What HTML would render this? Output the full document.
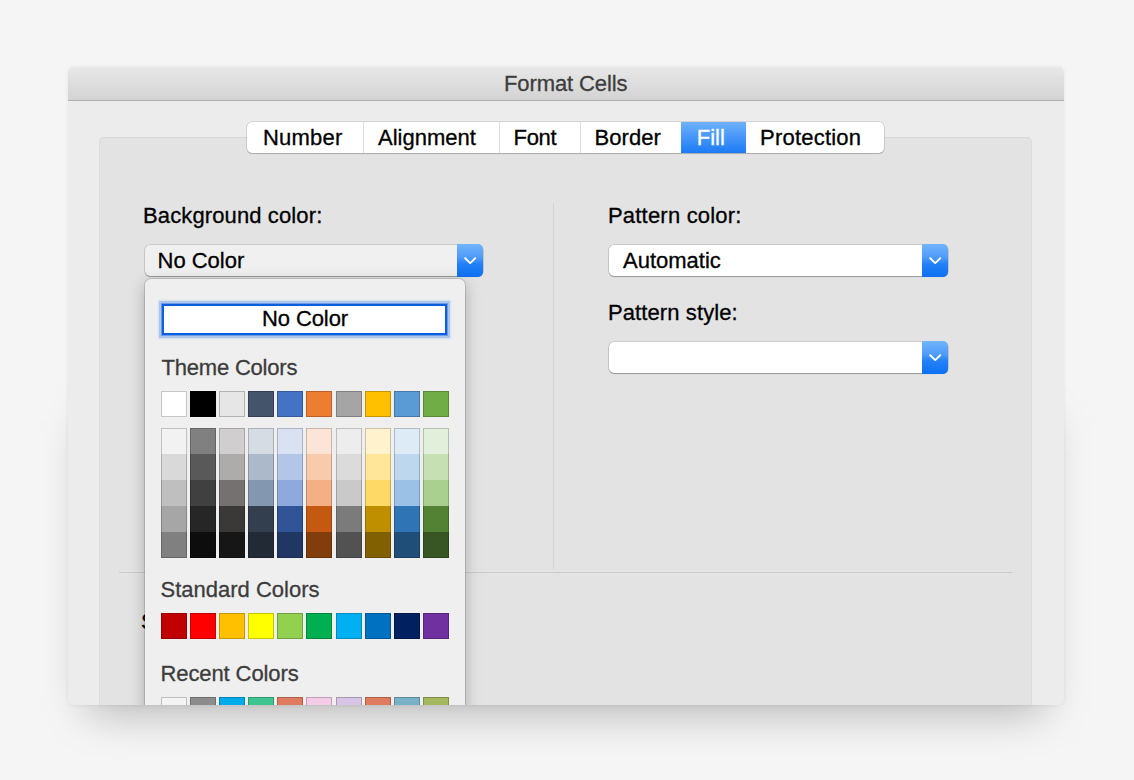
<!DOCTYPE html>
<html><head><meta charset="utf-8">
<style>
*{box-sizing:border-box;margin:0;padding:0}
html,body{width:1134px;height:780px;overflow:hidden;background:#f5f5f5;font-family:"Liberation Sans",sans-serif;}
.abs{position:absolute}
#win{position:absolute;left:68px;top:67px;width:996px;height:638px;border-radius:6px;background:#ececec;overflow:hidden;
 box-shadow:0 0 4px rgba(0,0,0,0.07);}
#title{position:absolute;left:0;top:0;width:996px;height:34px;background:linear-gradient(#e8e8e8,#d3d3d3);border-bottom:1px solid #b0b0b0;}
.t{position:absolute;white-space:nowrap;font-size:22px;line-height:22px;color:#000;-webkit-text-stroke:0.3px currentColor}
#box{position:absolute;left:31px;top:70px;width:933px;height:600px;background:#e3e3e3;border:1px solid #dddddd;border-top-color:#d6d6d6;border-radius:5px}
#tabs{position:absolute;left:179px;top:55px;width:637px;height:31px;background:#fff;border-radius:5px;box-shadow:0 0 0 0.5px rgba(0,0,0,0.2),0 1px 1px rgba(0,0,0,0.17)}
.tab{position:absolute;top:0;height:31px;border-left:1px solid #dcdcdc}
.dd{position:absolute;height:31px;background:#fff;border-radius:5px;box-shadow:0 0 0 0.5px rgba(0,0,0,0.22),0 1px 1px rgba(0,0,0,0.25)}
.ddb{position:absolute;right:0;top:-1px;width:26px;height:32.5px;border-radius:0 5px 5px 0;background:linear-gradient(#72b4fc 0%,#4f9cf9 40%,#2481f6 60%,#0d70f4 100%)}
.ddb svg{position:absolute;left:6.7px;top:13.2px}
#popup{position:absolute;left:77px;top:212px;width:320px;height:460px;background:#efefef;border-radius:6px;box-shadow:0 0 0 1px rgba(0,0,0,0.12),0 4px 16px rgba(0,0,0,0.25)}
.sw{position:absolute;width:26px;height:26px;border:1px solid rgba(0,0,0,0.22)}
</style></head>
<body>
<div class="abs" style="left:88px;top:420px;width:956px;height:292px;background:rgba(0,0,0,0.27);filter:blur(22px)"></div>
<div id="win">
  <div id="title"><div class="t" style="left:436px;top:6px;color:#3d3d3d;letter-spacing:-0.1px">Format Cells</div></div>
  <div id="box"></div>
  <div id="tabs">
    <div class="t" style="left:16px;top:5px;letter-spacing:0.2px">Number</div>
    <div class="tab" style="left:116px;width:136px"><div class="t" style="left:14px;top:5px">Alignment</div></div>
    <div class="tab" style="left:252px;width:81px"><div class="t" style="left:13.5px;top:5px;letter-spacing:-0.3px">Font</div></div>
    <div class="tab" style="left:333px;width:101px"><div class="t" style="left:13.5px;top:5px;letter-spacing:0.05px">Border</div></div>
    <div class="tab" style="left:434px;width:65px;background:linear-gradient(#6fb1fb,#1c7bf6);border-left:none"><div class="t" style="left:15.7px;top:5px;color:#fff">Fill</div></div>
    <div class="tab" style="left:499px;width:138px;border-left:none"><div class="t" style="left:14px;top:5px;letter-spacing:0.22px">Protection</div></div>
  </div>
  <div class="t" style="left:75px;top:138px;letter-spacing:0.12px">Background color:</div>
  <div class="dd" style="left:77px;top:178px;width:338px;background:#f0f0f0"><div class="t" style="left:12.5px;top:5px">No Color</div><div class="ddb"><svg width="13" height="8" viewBox="0 0 13 8"><path d="M1.2 1.2 L6.2 6.1 L11.2 1.2" stroke="#fff" stroke-width="1.9" stroke-linecap="round" stroke-linejoin="round" fill="none"/></svg></div></div>
  <div class="abs" style="left:485px;top:136px;width:1px;height:366px;background:#d3d3d3"></div>
  <div class="t" style="left:540px;top:138px;letter-spacing:0.2px">Pattern color:</div>
  <div class="dd" style="left:541px;top:178px;width:339px"><div class="t" style="left:14px;top:5px">Automatic</div><div class="ddb"><svg width="13" height="8" viewBox="0 0 13 8"><path d="M1.2 1.2 L6.2 6.1 L11.2 1.2" stroke="#fff" stroke-width="1.9" stroke-linecap="round" stroke-linejoin="round" fill="none"/></svg></div></div>
  <div class="t" style="left:540px;top:235px;letter-spacing:0.1px">Pattern style:</div>
  <div class="dd" style="left:541px;top:275px;width:339px"><div class="ddb"><svg width="13" height="8" viewBox="0 0 13 8"><path d="M1.2 1.2 L6.2 6.1 L11.2 1.2" stroke="#fff" stroke-width="1.9" stroke-linecap="round" stroke-linejoin="round" fill="none"/></svg></div></div>
  <div class="abs" style="left:51px;top:505px;width:893px;height:1px;background:#cacaca"></div>
  <div class="t" style="left:73px;top:544px">Sample</div>
  <div id="popup">
    <div class="abs" style="left:17px;top:25px;width:285px;height:30.5px;background:#fff;border:2px solid #0a5fe0;box-shadow:0 0 0 1px rgba(40,105,220,0.45),0 0 0 3px rgba(95,150,230,0.35),0 0 1.5px 4px rgba(130,175,240,0.25)"><div class="t" style="left:0.5px;width:281px;text-align:center;top:2px;letter-spacing:-0.1px">No Color</div></div>
    <div class="t" style="left:16.5px;top:78px;color:#3c3c3c;letter-spacing:-0.2px">Theme Colors</div>
    <div id="theme"><div class="sw" style="left:16px;top:112px;height:26px;background:#FFFFFF"></div><div class="sw" style="left:45px;top:112px;height:26px;background:#000000"></div><div class="sw" style="left:74px;top:112px;height:26px;background:#E7E6E6"></div><div class="sw" style="left:103px;top:112px;height:26px;background:#44546A"></div><div class="sw" style="left:132px;top:112px;height:26px;background:#4472C4"></div><div class="sw" style="left:161px;top:112px;height:26px;background:#ED7D31"></div><div class="sw" style="left:191px;top:112px;height:26px;background:#A5A5A5"></div><div class="sw" style="left:220px;top:112px;height:26px;background:#FFC000"></div><div class="sw" style="left:249px;top:112px;height:26px;background:#5B9BD5"></div><div class="sw" style="left:278px;top:112px;height:26px;background:#70AD47"></div><div class="abs" style="left:16px;top:149px;width:26px;height:130px;border:1px solid rgba(0,0,0,0.2);background:linear-gradient(#F2F2F2 0%,#F2F2F2 20%,#D9D9D9 20%,#D9D9D9 40%,#BFBFBF 40%,#BFBFBF 60%,#A6A6A6 60%,#A6A6A6 80%,#808080 80%,#808080 100%);background-origin:border-box"></div><div class="abs" style="left:45px;top:149px;width:26px;height:130px;border:1px solid rgba(0,0,0,0.2);background-origin:border-box;background:linear-gradient(#808080 0%,#808080 20%,#595959 20%,#595959 40%,#404040 40%,#404040 60%,#262626 60%,#262626 80%,#0D0D0D 80%,#0D0D0D 100%);background-origin:border-box"></div><div class="abs" style="left:74px;top:149px;width:26px;height:130px;border:1px solid rgba(0,0,0,0.2);background-origin:border-box;background:linear-gradient(#D0CECE 0%,#D0CECE 20%,#AEABAB 20%,#AEABAB 40%,#757171 40%,#757171 60%,#3B3838 60%,#3B3838 80%,#171616 80%,#171616 100%);background-origin:border-box"></div><div class="abs" style="left:103px;top:149px;width:26px;height:130px;border:1px solid rgba(0,0,0,0.2);background-origin:border-box;background:linear-gradient(#D6DCE4 0%,#D6DCE4 20%,#ACB9CA 20%,#ACB9CA 40%,#8497B0 40%,#8497B0 60%,#333F4F 60%,#333F4F 80%,#222B35 80%,#222B35 100%);background-origin:border-box"></div><div class="abs" style="left:132px;top:149px;width:26px;height:130px;border:1px solid rgba(0,0,0,0.2);background-origin:border-box;background:linear-gradient(#D9E1F2 0%,#D9E1F2 20%,#B4C6E7 20%,#B4C6E7 40%,#8EA9DB 40%,#8EA9DB 60%,#305496 60%,#305496 80%,#203764 80%,#203764 100%);background-origin:border-box"></div><div class="abs" style="left:161px;top:149px;width:26px;height:130px;border:1px solid rgba(0,0,0,0.2);background-origin:border-box;background:linear-gradient(#FCE4D6 0%,#FCE4D6 20%,#F8CBAD 20%,#F8CBAD 40%,#F4B084 40%,#F4B084 60%,#C65911 60%,#C65911 80%,#833C0C 80%,#833C0C 100%);background-origin:border-box"></div><div class="abs" style="left:191px;top:149px;width:26px;height:130px;border:1px solid rgba(0,0,0,0.2);background-origin:border-box;background:linear-gradient(#EDEDED 0%,#EDEDED 20%,#DBDBDB 20%,#DBDBDB 40%,#C9C9C9 40%,#C9C9C9 60%,#7B7B7B 60%,#7B7B7B 80%,#525252 80%,#525252 100%);background-origin:border-box"></div><div class="abs" style="left:220px;top:149px;width:26px;height:130px;border:1px solid rgba(0,0,0,0.2);background-origin:border-box;background:linear-gradient(#FFF2CC 0%,#FFF2CC 20%,#FFE699 20%,#FFE699 40%,#FFD966 40%,#FFD966 60%,#BF8F00 60%,#BF8F00 80%,#806000 80%,#806000 100%);background-origin:border-box"></div><div class="abs" style="left:249px;top:149px;width:26px;height:130px;border:1px solid rgba(0,0,0,0.2);background-origin:border-box;background:linear-gradient(#DDEBF7 0%,#DDEBF7 20%,#BDD7EE 20%,#BDD7EE 40%,#9BC2E6 40%,#9BC2E6 60%,#2F75B5 60%,#2F75B5 80%,#1F4E78 80%,#1F4E78 100%);background-origin:border-box"></div><div class="abs" style="left:278px;top:149px;width:26px;height:130px;border:1px solid rgba(0,0,0,0.2);background-origin:border-box;background:linear-gradient(#E2EFDA 0%,#E2EFDA 20%,#C6E0B4 20%,#C6E0B4 40%,#A9D08E 40%,#A9D08E 60%,#548235 60%,#548235 80%,#375623 80%,#375623 100%);background-origin:border-box"></div></div>
    <div class="t" style="left:15.5px;top:300px;color:#3c3c3c">Standard Colors</div>
    <div id="std"><div class="sw" style="left:16px;top:334px;height:26px;background:#C00000"></div><div class="sw" style="left:45px;top:334px;height:26px;background:#FF0000"></div><div class="sw" style="left:74px;top:334px;height:26px;background:#FFC000"></div><div class="sw" style="left:103px;top:334px;height:26px;background:#FFFF00"></div><div class="sw" style="left:132px;top:334px;height:26px;background:#92D050"></div><div class="sw" style="left:161px;top:334px;height:26px;background:#00B050"></div><div class="sw" style="left:191px;top:334px;height:26px;background:#00B0F0"></div><div class="sw" style="left:220px;top:334px;height:26px;background:#0070C0"></div><div class="sw" style="left:249px;top:334px;height:26px;background:#002060"></div><div class="sw" style="left:278px;top:334px;height:26px;background:#7030A0"></div></div>
    <div class="t" style="left:15.5px;top:384px;color:#3c3c3c;letter-spacing:-0.1px">Recent Colors</div>
    <div id="recent"><div class="sw" style="left:16px;top:418px;height:26px;background:#F4F4F4"></div><div class="sw" style="left:45px;top:418px;height:26px;background:#8C8C8C"></div><div class="sw" style="left:74px;top:418px;height:26px;background:#00ABEC"></div><div class="sw" style="left:103px;top:418px;height:26px;background:#3EC48E"></div><div class="sw" style="left:132px;top:418px;height:26px;background:#DF7B5E"></div><div class="sw" style="left:161px;top:418px;height:26px;background:#F6CBE8"></div><div class="sw" style="left:191px;top:418px;height:26px;background:#D8C4E5"></div><div class="sw" style="left:220px;top:418px;height:26px;background:#DF7B5E"></div><div class="sw" style="left:249px;top:418px;height:26px;background:#79B1C8"></div><div class="sw" style="left:278px;top:418px;height:26px;background:#A5B75F"></div></div>
  </div>
</div>
</body></html>
